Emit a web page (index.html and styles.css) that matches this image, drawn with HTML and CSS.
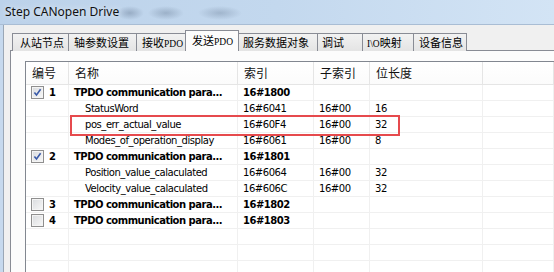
FILE: index.html
```html
<!DOCTYPE html>
<html>
<head>
<meta charset="utf-8">
<link rel="stylesheet" href="styles.css">
</head>
<body>
<div class="window">
  <div class="titlebar"><span class="title">Step CANopen Drive</span></div>
  <div class="frame">
    <div class="client">
      <div class="tabs">
        <div class="tab t1">从站节点</div>
        <div class="tab t2">轴参数设置</div>
        <div class="tab t3">接收<span class="lat">PDO</span></div>
        <div class="tab t4 sel">发送<span class="lat">PDO</span></div>
        <div class="tab t5">服务数据对象</div>
        <div class="tab t6">调试</div>
        <div class="tab t7"><span class="lat">I\O</span>映射</div>
        <div class="tab t8">设备信息</div>
      </div>
      <div class="page">
        <div class="grid">
          <div class="hc">编号</div><div class="hc">名称</div><div class="hc">索引</div><div class="hc">子索引</div><div class="hc">位长度</div><div class="hc"></div>

          <div class="c num"><span class="cb on"><svg viewBox="0 0 11 11" width="11" height="11"><path d="M2.4 5.4 L4.5 7.9 L8.6 2.2" fill="none" stroke="#3a5aa8" stroke-width="1.6"/></svg></span><b>1</b></div><div class="c b">TPDO communication para...</div><div class="c b">16#1800</div><div class="c"></div><div class="c"></div><div class="c"></div>

          <div class="c"></div><div class="c sub">StatusWord</div><div class="c">16#6041</div><div class="c">16#00</div><div class="c">16</div><div class="c"></div>

          <div class="c"></div><div class="c sub">pos_err_actual_value</div><div class="c">16#60F4</div><div class="c">16#00</div><div class="c">32</div><div class="c"></div>

          <div class="c"></div><div class="c sub">Modes_of_operation_display</div><div class="c">16#6061</div><div class="c">16#00</div><div class="c">8</div><div class="c"></div>

          <div class="c num"><span class="cb on"><svg viewBox="0 0 11 11" width="11" height="11"><path d="M2.4 5.4 L4.5 7.9 L8.6 2.2" fill="none" stroke="#3a5aa8" stroke-width="1.6"/></svg></span><b>2</b></div><div class="c b">TPDO communication para...</div><div class="c b">16#1801</div><div class="c"></div><div class="c"></div><div class="c"></div>

          <div class="c"></div><div class="c sub">Position_value_calaculated</div><div class="c">16#6064</div><div class="c">16#00</div><div class="c">32</div><div class="c"></div>

          <div class="c"></div><div class="c sub">Velocity_value_calaculated</div><div class="c">16#606C</div><div class="c">16#00</div><div class="c">32</div><div class="c"></div>

          <div class="c num"><span class="cb"></span><b>3</b></div><div class="c b">TPDO communication para...</div><div class="c b">16#1802</div><div class="c"></div><div class="c"></div><div class="c"></div>

          <div class="c num"><span class="cb"></span><b>4</b></div><div class="c b">TPDO communication para...</div><div class="c b">16#1803</div><div class="c"></div><div class="c"></div><div class="c"></div>

          <div class="c"></div><div class="c"></div><div class="c"></div><div class="c"></div><div class="c"></div><div class="c"></div>
          <div class="c"></div><div class="c"></div><div class="c"></div><div class="c"></div><div class="c"></div><div class="c"></div>
          <div class="c"></div><div class="c"></div><div class="c"></div><div class="c"></div><div class="c"></div><div class="c"></div>

          <div class="mark"></div>
        </div>
      </div>
    </div>
  </div>
</div>
</body>
</html>
```
FILE: styles.css
```css
html, body {
  margin: 0;
  padding: 0;
}
body {
  width: 554px;
  height: 272px;
  overflow: hidden;
  background: #c6d9ee;
}
.window {
  width: 554px;
  height: 272px;
  display: flex;
  flex-direction: column;
  overflow: hidden;
}
.titlebar {
  height: 24px;
  flex: none;
  display: flex;
  align-items: center;
  padding-left: 5px;
  background:
    radial-gradient(ellipse 14px 7px at 130px 13px, rgba(120,140,165,0.55), rgba(120,140,165,0) 100%),
    radial-gradient(ellipse 18px 7px at 166px 13px, rgba(120,140,165,0.5), rgba(120,140,165,0) 100%),
    radial-gradient(ellipse 22px 7px at 220px 13px, rgba(120,140,165,0.45), rgba(120,140,165,0) 100%),
    linear-gradient(to right, #bcd2ea 0%, #c3d8ee 50%, #d3e4f5 100%);
  border-bottom: 1px solid #a9bdd4;
}
.title {
  font-family: "Noto Sans", "Open Sans", sans-serif;
  font-size: 12px;
  color: #111;
  text-shadow: 0 0 6px rgba(255,255,255,0.8);
  margin-top: -1px;
}
.frame {
  flex: 1;
  display: flex;
  padding-left: 3px;
  background: #c6d9ee;
  min-height: 0;
}
.client {
  flex: 1;
  background: #f0f0f0;
  border-left: 1px solid #9aa7b6;
  padding: 6px 0 0 6px;
  display: flex;
  flex-direction: column;
  min-width: 0;
  min-height: 0;
  overflow: hidden;
}
.tabs {
  display: flex;
  align-items: flex-end;
  padding-left: 2px;
  height: 20px;
  flex: none;
  position: relative;
  z-index: 1;
  margin-bottom: -1px;
}
.tab {
  box-sizing: border-box;
  height: 18px;
  border: 1px solid #898c95;
  border-bottom: none;
  border-right: none;
  background: linear-gradient(#f2f2f2, #e4e4e4);
  font-family: "Noto Sans CJK SC", sans-serif;
  font-size: 11px;
  line-height: 16px;
  color: #000;
  padding-left: 5px;
  white-space: nowrap;
  overflow: hidden;
}
.tab.t8 { border-right: 1px solid #898c95; }
.tab .lat {
  font-family: "Liberation Serif", serif;
  font-size: 9.5px;
}
.tab.sel {
  height: 21px;
  background: #fcfcfc;
  border-right: 1px solid #898c95;
  line-height: 18px;
  padding-left: 6px;
}
.tab.sel + .tab { border-left: none; }
.t1 { width: 56px; padding-left: 7px; }
.t2 { width: 68px; }
.t3 { width: 49px; }
.t4 { width: 54px; }
.t5 { width: 78px; padding-left: 4px; }
.t6 { width: 45px; padding-left: 4px; }
.t7 { width: 51px; padding-left: 4px; }
.t8 { width: 54px; }

.page {
  flex: 1;
  background: #fcfcfc;
  border-top: 1px solid #898c95;
  border-left: 1px solid #898c95;
  padding: 10px 0 0 14px;
  min-height: 0;
  min-width: 0;
  overflow: hidden;
}
.grid {
  position: relative;
  display: grid;
  grid-template-columns: 43px 169px 76px 56px 113px 1fr;
  grid-template-rows: 23px;
  grid-auto-rows: 16px;
  background: #fff;
  border-top: 1px solid #828790;
  border-left: 1px solid #828790;
  color: #000;
}
.hc {
  box-sizing: border-box;
  border-right: 1px solid #e5e5e5;
  border-bottom: 1px solid #e5e5e5;
  font-family: "Noto Sans CJK SC", sans-serif;
  font-size: 12px;
  line-height: 22px;
  padding-left: 6px;
  color: #111;
  white-space: nowrap;
  background: linear-gradient(#ffffff, #fbfbfb);
}
.c {
  box-sizing: border-box;
  border-right: 1px solid #f0f0f0;
  border-bottom: 1px solid #f0f0f0;
  font-family: "DejaVu Sans", sans-serif;
  font-size: 10px;
  letter-spacing: -0.45px;
  line-height: 15px;
  padding-left: 5px;
  white-space: nowrap;
  overflow: hidden;
}
.c.b { font-weight: bold; letter-spacing: -0.5px; }
.c.sub { padding-left: 16px; }
.num {
  display: flex;
  align-items: center;
  gap: 5px;
}
.num b { font-weight: bold; }
.cb {
  box-sizing: border-box;
  width: 13px;
  height: 13px;
  border: 1px solid #8f8f8f;
  background: linear-gradient(135deg, #d9dbde, #f8f8f8);
  box-shadow: inset 0 0 0 1px #f4f4f4;
  display: flex;
  align-items: center;
  justify-content: center;
  flex: none;
}
.cb svg { display: block; }
.mark {
  position: absolute;
  left: 44px;
  top: 53px;
  width: 330px;
  height: 21px;
  box-sizing: border-box;
  border: 2px solid #e64a4d;
  pointer-events: none;
}
```
